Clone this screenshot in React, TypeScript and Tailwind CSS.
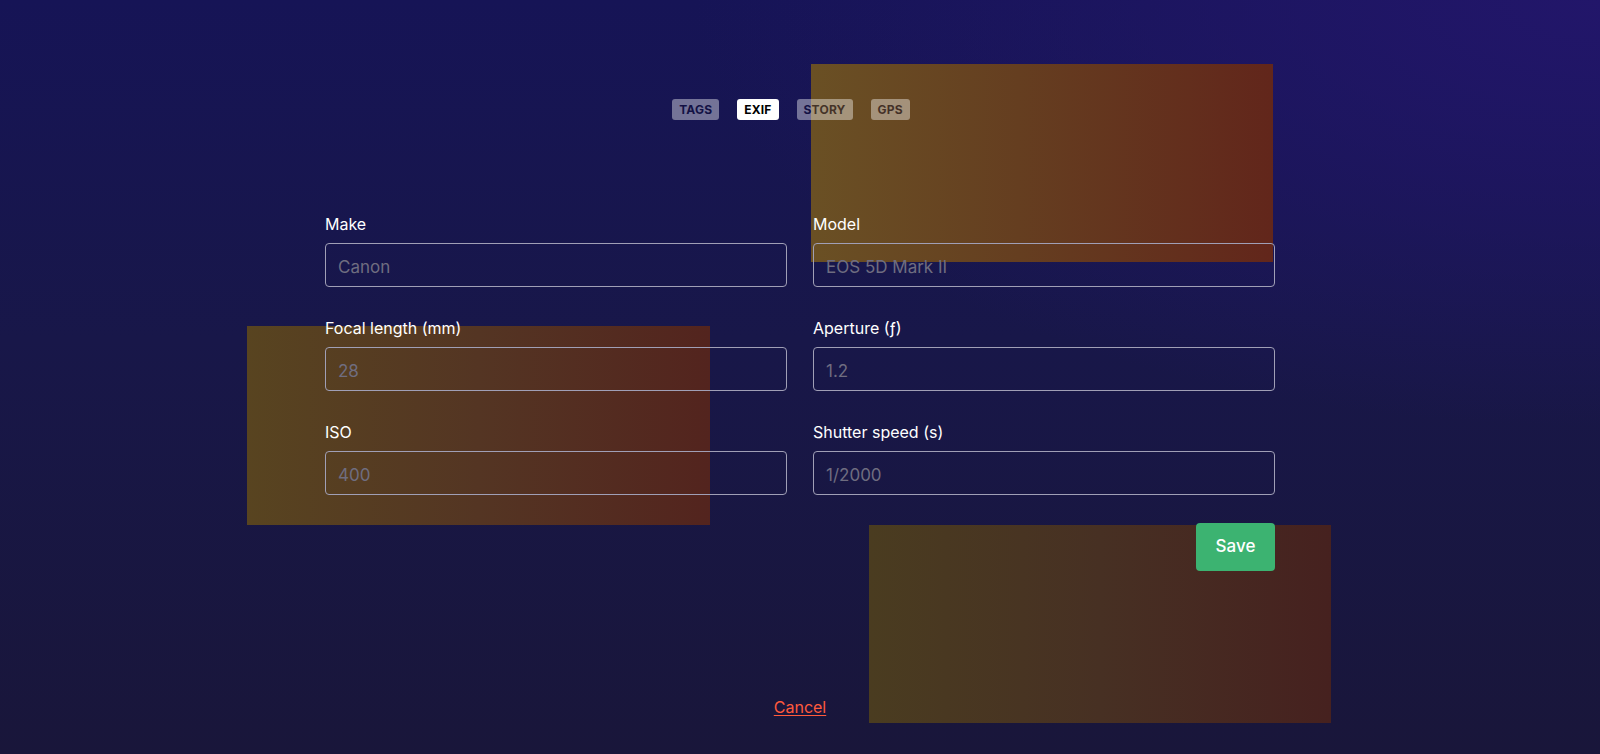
const tabs = [
  { label: "TAGS", active: false },
  { label: "EXIF", active: true },
  { label: "STORY", active: false },
  { label: "GPS", active: false },
]

const fields = [
  { label: "Make", placeholder: "Canon" },
  { label: "Model", placeholder: "EOS 5D Mark II" },
  { label: "Focal length (mm)", placeholder: "28" },
  { label: "Aperture (\u0192)", placeholder: "1.2" },
  { label: "ISO", placeholder: "400" },
  { label: "Shutter speed (s)", placeholder: "1/2000" },
]

function Field({ label, placeholder }: { label: string; placeholder: string }) {
  return (
    <label className="flex flex-col">
      <span className="text-base leading-6 text-white mb-[7px]">{label}</span>
      <input
        type="text"
        placeholder={placeholder}
        className="h-[44px] w-full rounded-[4px] border border-[#a09fb6] bg-transparent px-3 pt-[3px] text-[17px] text-white placeholder:text-[#6f6d80] outline-none"
      />
    </label>
  )
}

export default function App() {
  return (
    <div className="relative h-[754px] w-full overflow-hidden font-['Inter',sans-serif] bg-[radial-gradient(ellipse_at_top_right,#22166a_0%,transparent_40%),linear-gradient(to_bottom,#161456_0%,#181749_45%,#19163a_100%)]">
      {/* decorative blocks */}
      <div className="absolute left-[811px] top-[64px] h-[198px] w-[462px] bg-[linear-gradient(to_right,#6a5024,#653e20_45%,#62261b)]" />
      <div className="absolute left-[247px] top-[326px] h-[199px] w-[463px] bg-[linear-gradient(to_right,#584420,#543523_50%,#53241e)]" />
      <div className="absolute left-[869px] top-[525px] h-[198px] w-[462px] bg-[linear-gradient(to_right,#4a3c20,#473023_50%,#46211f)]" />

      <div className="relative z-10 flex flex-col items-center pt-[99px]">
        <nav className="flex justify-center">
          {tabs.map((t) => (
            <button
              key={t.label}
              className={
                t.active
                  ? "mr-[18px] h-[21px] rounded-[3px] bg-white px-[7px] text-[12px] font-bold leading-[21px] tracking-[0.2px] text-black"
                  : "mr-[18px] h-[21px] rounded-[3px] bg-white px-[7px] text-[12px] font-bold leading-[21px] tracking-[0.2px] text-[#0c0b30] opacity-40"
              }
            >
              {t.label}
            </button>
          ))}
        </nav>

        <form className="mt-[92px] w-[950px]">
          <div className="grid grid-cols-2 gap-x-[26px] gap-y-[29px]">
            {fields.map((f) => (
              <Field key={f.label} label={f.label} placeholder={f.placeholder} />
            ))}
          </div>
          <div className="mt-[28px] flex justify-end">
            <button
              type="button"
              className="h-[48px] w-[79px] rounded-[4px] bg-[#3cb371] text-[17px] font-medium text-white"
            >
              Save
            </button>
          </div>
        </form>

        <a href="#" className="mt-[124px] text-base leading-6 text-[#ff5a3c] underline underline-offset-2">
          Cancel
        </a>
      </div>
    </div>
  )
}
